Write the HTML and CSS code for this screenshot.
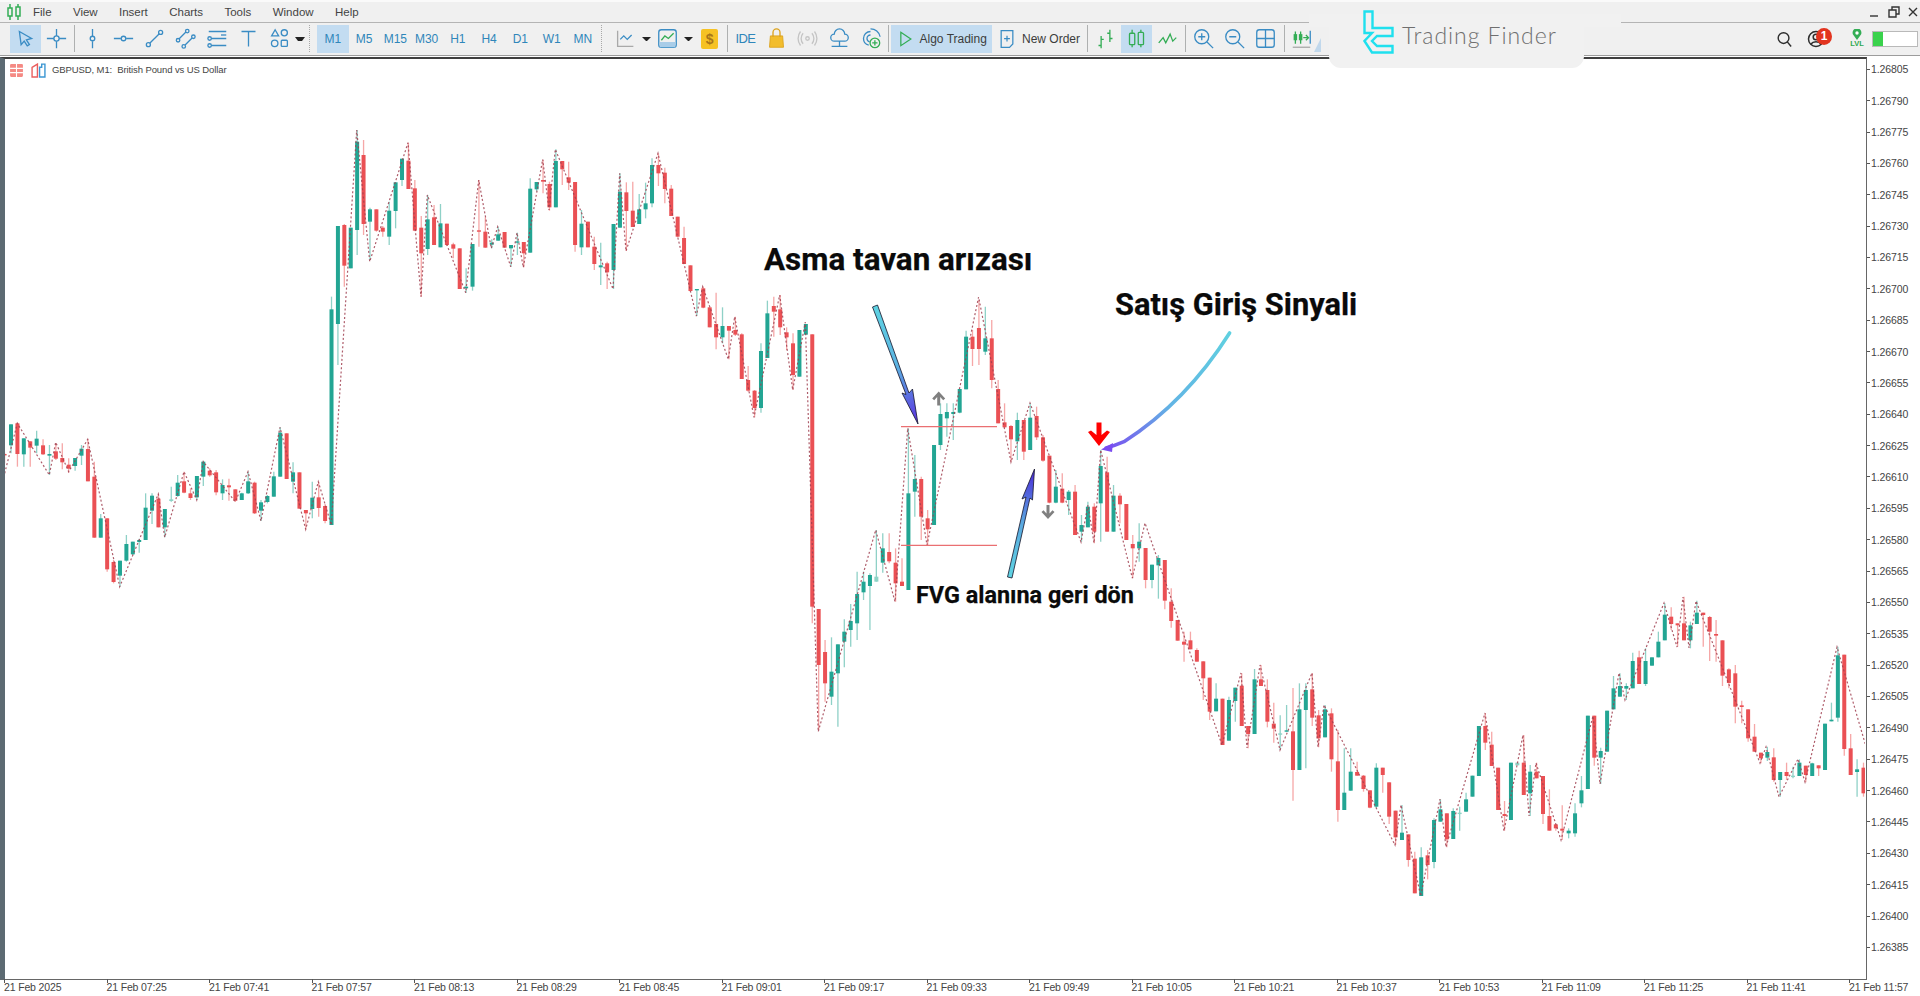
FILE: index.html
```html
<!DOCTYPE html>
<html lang="tr">
<head>
<meta charset="utf-8">
<title>GBPUSD, M1</title>
<link rel="stylesheet" href="styles.css">
</head>
<body>
<div class="app">
  <header class="menubar">
    <svg class="app-logo" viewBox="0 0 18 18"><path class="gr" d="M5 1v16M13 1v16"/><rect class="gr-lite" x="3" y="5" width="4" height="8"/><rect class="gr-lite" x="11" y="4" width="4" height="9"/></svg>
    <nav class="menu"><span>File</span><span>View</span><span>Insert</span><span>Charts</span><span>Tools</span><span>Window</span><span>Help</span></nav>
    <div class="winctl">
      <svg viewBox="0 0 14 14"><path class="dk" d="M2 11h8"/></svg>
      <svg viewBox="0 0 14 14"><path class="dk" d="M2 5h7v7H2zM5 5V2h7v7H9"/></svg>
      <svg viewBox="0 0 14 14"><path class="dk" d="M3 3l8 8M11 3l-8 8"/></svg>
    </div>
  </header>

  <div class="toolbar">
    <button class="tb on"><svg viewBox="0 0 24 24"><path class="ic" d="M5 4l14 8-6 1.5 3.5 5.5-2.5 1.5-3.5-5.5L7 19z"/></svg></button>
    <button class="tb"><svg viewBox="0 0 24 24"><path class="ic" d="M1 12h8M15 12h8M12 1v8M12 15v8"/><circle class="ic" cx="12" cy="12" r="3"/></svg></button>
    <i class="sep"></i>
    <button class="tb"><svg viewBox="0 0 24 24"><path class="ic" d="M12 1v8M12 15v8"/><circle class="ic" cx="12" cy="12" r="2.6"/></svg></button>
    <button class="tb"><svg viewBox="0 0 24 24"><path class="ic" d="M1 12h8M15 12h8"/><circle class="ic" cx="12" cy="12" r="2.6"/></svg></button>
    <button class="tb"><svg viewBox="0 0 24 24"><path class="ic" d="M6.5 17.5L17.5 6.5"/><circle class="ic" cx="5" cy="19" r="2.3"/><circle class="ic" cx="19" cy="5" r="2.3"/></svg></button>
    <button class="tb"><svg viewBox="0 0 24 24"><path class="ic" d="M4.5 12.5L12.5 4.5M11.5 19.5L19.5 11.5"/><circle class="ic" cx="14" cy="3.5" r="2"/><circle class="ic" cx="3.5" cy="14" r="2"/><circle class="ic" cx="10" cy="21" r="2"/><circle class="ic" cx="21" cy="10" r="2"/></svg></button>
    <button class="tb"><svg viewBox="0 0 24 24"><path class="ic" d="M2 4h20M5 12h17M5 20h17"/><circle class="ic" cx="3" cy="20" r="2"/><circle class="ic" cx="3" cy="12" r="2"/><path class="ic" d="M16 8h6"/></svg></button>
    <button class="tb"><svg viewBox="0 0 24 24"><path class="ic" d="M4 4h16M12 4v17"/></svg></button>
    <button class="tb"><svg viewBox="0 0 24 24"><path class="ic" d="M7 2l4 7H3z"/><circle class="ic" cx="17.5" cy="5.5" r="3.5"/><circle class="ic" cx="6.5" cy="17.5" r="3.7"/><rect class="ic" x="14" y="14" width="7" height="7" rx="1"/></svg></button>
    <span class="caret"></span>
    <i class="grip g1"></i>
    <button class="tb tf on">M1</button><button class="tb tf">M5</button><button class="tb tf">M15</button><button class="tb tf">M30</button><button class="tb tf">H1</button><button class="tb tf">H4</button><button class="tb tf">D1</button><button class="tb tf">W1</button><button class="tb tf">MN</button>
    <i class="grip g2"></i>
    <button class="tb"><svg viewBox="0 0 24 24"><path class="gy" d="M3 3v18h18"/><path class="ic" d="M6 13l4-4 4 4 5-5"/></svg></button>
    <span class="caret c2"></span>
    <button class="tb"><svg viewBox="0 0 24 24"><rect class="ic" x="2" y="2" width="20" height="20" rx="3"/><path class="ic-f" d="M3 16h18v5a1 1 0 0 1-1 1H4a1 1 0 0 1-1-1z"/><path class="gr" d="M5 14l4-5 4 3 6-6"/></svg></button>
    <span class="caret c2"></span>
    <button class="tb"><span class="dollar">$</span></button>
    <i class="sep"></i>
    <button class="tb tf ide">IDE</button>
    <button class="tb"><svg viewBox="0 0 24 24"><path class="gold" d="M5 9h14l1 13H4z"/><path class="gold-l" d="M8 10V5a4 4 0 0 1 8 0v5"/></svg></button>
    <button class="tb"><svg viewBox="0 0 24 24"><circle class="lg" cx="12" cy="12" r="2"/><path class="lg" d="M7 6a9 9 0 0 0 0 12M17 6a9 9 0 0 1 0 12M4 4a13 13 0 0 0 0 16M20 4a13 13 0 0 1 0 16"/></svg></button>
    <button class="tb"><svg viewBox="0 0 24 24"><path class="ic" d="M6 15a4 4 0 0 1 0-8 6 6 0 0 1 12 0 4 4 0 0 1 0 8zM12 15v6M3 21h18"/></svg></button>
    <button class="tb"><svg viewBox="0 0 24 24"><path class="ic" d="M12 4a8 8 0 0 0-8 8 8 8 0 0 0 6 7.700M12 8a4 4 0 0 0-4 4 4 4 0 0 0 3 3.800M12 1a11 11 0 0 1 11 9"/><circle class="gr" cx="17" cy="17" r="5.500"/><path class="gr" d="M14 17h6M17 14v6"/></svg></button>
    <i class="sep"></i>
    <button class="tb-text on algo"><svg viewBox="0 0 24 24"><path class="gr" d="M7 4l12 8-12 8z"/></svg><span>Algo Trading</span></button>
    <button class="tb-text order"><svg viewBox="0 0 24 24"><path class="ic" d="M5 2h14v16l-4 4H5z"/><path class="ic" d="M12 8v7M8.500 11.500h7"/></svg><span>New Order</span></button>
    <i class="sep"></i>
    <button class="tb"><svg viewBox="0 0 24 24"><path class="gr" d="M7 9v14M4 20h3M7 13h3M17 2v14M14 6h3M17 12h3"/></svg></button>
    <button class="tb on"><svg viewBox="0 0 24 24"><path class="gr" d="M7 2v20M17 2v20"/><rect class="gr-o" x="4" y="6" width="6" height="13" rx="1"/><rect class="gr-o" x="14" y="5" width="6" height="14" rx="1"/></svg></button>
    <button class="tb"><svg viewBox="0 0 24 24"><path class="gr" d="M2 17l5-6 3 6 5-10 3 8 4-4"/></svg></button>
    <i class="sep"></i>
    <button class="tb"><svg viewBox="0 0 24 24"><circle class="ic" cx="10" cy="10" r="8"/><path class="ic" d="M16 16l7 7M6 10h8M10 6v8"/></svg></button>
    <button class="tb"><svg viewBox="0 0 24 24"><circle class="ic" cx="10" cy="10" r="8"/><path class="ic" d="M16 16l7 7M6 10h8"/></svg></button>
    <button class="tb"><svg viewBox="0 0 24 24"><rect class="ic" x="2" y="2" width="20" height="20" rx="3"/><path class="ic" d="M12 2v20M2 12h20"/></svg></button>
    <i class="sep"></i>
    <button class="tb"><svg viewBox="0 0 24 24"><path class="gr" d="M5 4v14M11 4v14"/><rect class="gr-f" x="3" y="7" width="4" height="7"/><rect class="gr-f" x="9" y="7" width="4" height="7"/><path class="gr" d="M14 11h5M17 8l3 3-3 3"/><path class="ic" d="M22 3v15"/><path class="gy" d="M2 22h20"/></svg></button>
    <span class="autotri"></span>
    <div class="status">
      <svg class="st-search" viewBox="0 0 18 18"><circle class="dk2" cx="8" cy="8" r="5.700"/><path class="dk2" d="M12 12l4 5"/></svg>
      <div class="user">
        <svg viewBox="0 0 20 20"><circle class="dk2" cx="9" cy="10" r="7.500"/><circle class="dk2" cx="9" cy="8" r="2.800"/><path class="dk2" d="M4 15c2-3 8-3 10 0"/></svg>
        <span class="badge">1</span>
      </div>
      <div class="lvl">
        <svg viewBox="0 0 12 11"><path class="gr-f" d="M6 11L2 5.500a4.400 4.400 0 1 1 8 0z"/><circle class="wh" cx="6" cy="4" r="1.700"/></svg>
        <span>LVL</span>
      </div>
      <div class="meter"><i></i></div>
    </div>
  </div>

  <main class="chart-window">
    <div class="plot-row">
      <div class="plot">
        <div class="chart-title">
          <svg viewBox="0 0 14 14"><rect class="t-red" x="1" y="1" width="12" height="12" rx="1"/><path class="wh-l" d="M1 5h12M1 9h12M7 1v12"/></svg>
          <svg viewBox="0 0 14 14"><path class="t-red-o" d="M1 4l5-3v12H1z"/><path class="t-blue-o" d="M8 13V4h2V1h3v12z"/></svg>
          <span>GBPUSD, M1:&nbsp; British Pound vs US Dollar</span>
        </div>
        <svg id="chart" class="chart" viewBox="5 59 1860 920">
          <defs>
            <linearGradient id="arrowA" gradientUnits="userSpaceOnUse" x1="875" y1="306" x2="918" y2="424"><stop offset="0" stop-color="#5fd3e2"/><stop offset=".5" stop-color="#5cb4e2"/><stop offset="1" stop-color="#5a2fe0"/></linearGradient>
            <linearGradient id="arrowB" gradientUnits="userSpaceOnUse" x1="1010" y1="577" x2="1034" y2="469"><stop offset="0" stop-color="#5fd3e2"/><stop offset=".5" stop-color="#5aa8e0"/><stop offset="1" stop-color="#4a28d8"/></linearGradient>
            <linearGradient id="arrowC" gradientUnits="userSpaceOnUse" x1="1229" y1="333" x2="1105" y2="449"><stop offset="0" stop-color="#5fd0e0"/><stop offset=".55" stop-color="#62b4e4"/><stop offset="1" stop-color="#7a4cf0"/></linearGradient>
          </defs>
          <g id="series"></g>
          <path class="level" d="M901 426.700H997M901 545.300H997"/>
          <path class="sig-grey" d="M938.700 391.500l6.500 7-2 1.800-3-3.200v8.400h-3v-8.400l-3 3.200-2-1.800z"/>
          <path class="sig-grey" d="M1048 519l-6.500-7 2-1.800 3 3.200V505h3v8.400l3-3.200 2 1.800z"/>
          <path class="sig-red" d="M1099 446l-11-14 3-1.500 5.500 4.500v-12.500h5V435l5.500-4.500 3 1.500z"/>
          <polygon class="arrow-a" points="872.500,307 877.500,305 909,393 912.500,389 918,424 902,393 906,394.500"/>
          <polygon class="arrow-b" points="1007.500,577 1012,578 1030,498 1032.500,500 1034.500,469 1022,499 1026,497"/>
          <path class="arrow-c" d="M1229.600 333Q1186 402 1124 441.700Q1114 446 1106 448"/>
          <polygon class="arrow-c-head" points="1101,449.500 1113,443 1112,452"/>
        </svg>
      </div>
      <div class="yaxis">
        <span>1.26805</span><span>1.26790</span><span>1.26775</span><span>1.26760</span><span>1.26745</span><span>1.26730</span><span>1.26715</span><span>1.26700</span><span>1.26685</span><span>1.26670</span><span>1.26655</span><span>1.26640</span><span>1.26625</span><span>1.26610</span><span>1.26595</span><span>1.26580</span><span>1.26565</span><span>1.26550</span><span>1.26535</span><span>1.26520</span><span>1.26505</span><span>1.26490</span><span>1.26475</span><span>1.26460</span><span>1.26445</span><span>1.26430</span><span>1.26415</span><span>1.26400</span><span>1.26385</span>
      </div>
    </div>
    <div class="xaxis">
      <span>21 Feb 2025</span><span>21 Feb 07:25</span><span>21 Feb 07:41</span><span>21 Feb 07:57</span><span>21 Feb 08:13</span><span>21 Feb 08:29</span><span>21 Feb 08:45</span><span>21 Feb 09:01</span><span>21 Feb 09:17</span><span>21 Feb 09:33</span><span>21 Feb 09:49</span><span>21 Feb 10:05</span><span>21 Feb 10:21</span><span>21 Feb 10:37</span><span>21 Feb 10:53</span><span>21 Feb 11:09</span><span>21 Feb 11:25</span><span>21 Feb 11:41</span><span>21 Feb 11:57</span>
    </div>
  </main>

  <div class="note note-a">Asma tavan arızası</div>
  <div class="note note-b">Satış Giriş Sinyali</div>
  <div class="note note-c">FVG alanına geri dön</div>

  <div class="brand">
    <svg class="brand-bg" viewBox="0 0 312 68"><path d="M0 14H312V27H275V56a12 12 0 0 1-12 12H32a12 12 0 0 1-12-12V27H0z"/></svg>
    <svg class="brand-mark" viewBox="0 0 31 44"><path d="M1.500 1.500h8v16.500h20v8H14l-5 5 5 5h15.500v6.500H9L1.500 31l7.500-8H1.500z"/></svg>
    <span class="brand-name">Trading Finder</span>
  </div>
</div>
<script src="chart.js"></script>
</body>
</html>
```
FILE: styles.css
```css
* { box-sizing: border-box; }
html, body { margin: 0; padding: 0; background: #fff; }
.app { position: relative; width: 1920px; height: 996px; overflow: hidden; display: flex; flex-direction: column; font-family: "Liberation Sans", Arial, sans-serif; color: #3c3c3c; }

.menubar { height: 23px; flex: none; display: flex; align-items: center; background: #f0f0f0; border-top: 2px solid #fafafa; border-bottom: 1px solid #b4b4b4; }
.app-logo { width: 18px; height: 18px; margin-left: 5px; }
.menu { display: flex; gap: 21.4px; margin-left: 10px; font-size: 11.5px; color: #444; }
.winctl { margin-left: auto; margin-right: 0; display: flex; gap: 5px; }
.winctl svg { width: 14px; height: 14px; }

.toolbar { height: 33px; flex: none; display: flex; align-items: center; padding: 0 0 1px 9.5px; background: #f0f0f0; border-bottom: 1px solid #9c9c9c; }
.tb { flex: none; width: 31.25px; height: 28px; padding: 0; margin: 0; border: 0; background: none; display: flex; align-items: center; justify-content: center; font: 12px "Liberation Sans", Arial, sans-serif; }
.tb svg { width: 21px; height: 21px; }
.tb.on, .tb-text.on { background: #c3dcf1; }
.tf { color: #2f86ba; }
.ide { letter-spacing: -.6px; font-size: 13px; }
.sep { flex: none; width: 4.5px; height: 27px; position: relative; }
.sep::before { content: ""; position: absolute; left: 2px; top: 0; bottom: 0; width: 1px; background: #aeb0b0; }
.caret { flex: none; width: 10px; height: 0; border-left: 3.5px solid transparent; border-right: 3.5px solid transparent; border-top: 4px solid #222; background-clip: padding-box; }
.caret.c2 { width: 9px; border-left-width: 4px; border-right-width: 4px; margin: 0 1px; }
.grip { flex: none; height: 27px; border-left: 1px dotted #a8a8a8; }
.g1 { width: 8px; margin: 0 0 0 4px; }
.g2 { width: 5px; margin: 0 4px 0 2px; }
.dollar { width: 17px; height: 20px; border-radius: 2px; background: #f6c224; color: #a8761a; font: 700 14px/20px "Liberation Sans", Arial, sans-serif; text-align: center; }
.tb-text { flex: none; height: 28px; padding: 0; border: 0; background: none; display: flex; align-items: center; font: 12px "Liberation Sans", Arial, sans-serif; color: #3c3c3c; }
.tb-text svg { width: 20px; height: 20px; margin-right: 5px; }
.algo { width: 101.5px; padding-left: 4px; }
.order { width: 93px; padding-left: 5px; }
.autotri { flex: none; width: 0; height: 0; margin: 12px 0 0 -3px; border-left: 7px solid transparent; border-bottom: 14px solid #c1d8ec; }
.status { margin-left: auto; display: flex; align-items: center; }
.st-search { width: 17px; height: 18px; margin-right: 14px; }
.user { position: relative; width: 18px; height: 20px; margin-right: 24px; }
.user svg { width: 20px; height: 20px; }
.badge { position: absolute; left: 9px; top: -1px; width: 16px; height: 17px; border-radius: 50%; background: #e2341f; color: #fff; font: 700 12px/17px "Liberation Sans", Arial, sans-serif; text-align: center; }
.lvl { width: 16px; display: flex; flex-direction: column; align-items: center; margin-right: 7px; color: #2fa84f; font: 700 7.5px/8px "Liberation Sans", Arial, sans-serif; }
.lvl svg { width: 12px; height: 11px; }
.meter { width: 46px; height: 16px; margin-right: 2px; border: 1px solid #b9b9b9; background: #fff; }
.meter i { display: block; width: 10px; height: 100%; background: #3ad24c; }

.ic { fill: none; stroke: #3a8cc4; stroke-width: 1.5; }
.ic-f { fill: #a9cde8; }
.gy { fill: none; stroke: #a9a9a9; stroke-width: 1.5; }
.gr { fill: none; stroke: #33ad55; stroke-width: 1.5; }
.gr-f { fill: #33ad55; }
.gr-o { fill: #c3dcf1; stroke: #33ad55; stroke-width: 1.5; }
.gr-lite { fill: #f0f0f0; stroke: #33ad55; stroke-width: 1.5; }
.gold { fill: #f2bd2d; stroke: #dca21c; }
.gold-l { fill: none; stroke: #dca21c; stroke-width: 1.5; }
.lg { fill: none; stroke: #c4c4c4; stroke-width: 1.5; }
.dk { fill: none; stroke: #333; stroke-width: 1.4; }
.dk2 { fill: none; stroke: #2d2d2d; stroke-width: 1.5; }
.wh { fill: #fff; }
.wh-l { fill: none; stroke: #fff; }
.t-red { fill: #f58a84; }
.t-red-o { fill: #fff; stroke: #ea5f5f; stroke-width: 1.3; }
.t-blue-o { fill: #fff; stroke: #3b96d2; stroke-width: 1.3; }

.chart-window { flex: 1; min-height: 0; display: flex; flex-direction: column; }
.plot-row { height: 924px; flex: none; display: flex; border-top: 1px solid #fff; }
.plot { position: relative; width: 1866.5px; flex: none; border-top: 2px solid #3f3f3f; border-left: 5px solid #5c6a72; border-right: 1.5px solid #666; border-bottom: 1px solid #666; }
.chart { display: block; width: 1860px; height: 920px; }
.chart-title { position: absolute; left: 4px; top: 3px; display: flex; align-items: center; font-size: 9.5px; letter-spacing: -.1px; line-height: 16px; color: #444; }
.chart-title svg { width: 15px; height: 15px; margin-right: 7px; }
.chart-title span { margin-left: -1px; }

.yaxis { flex: none; display: flex; flex-direction: column; padding-top: 5.3px; font-size: 10.5px; letter-spacing: -.12px; color: #444; }
.yaxis span { position: relative; height: 31.37px; line-height: 14px; padding-left: 4.5px; }
.yaxis span::before { content: ""; position: absolute; left: 0; top: 6.5px; width: 3px; height: 1px; background: #555; }
.xaxis { display: flex; padding-left: 4px; font-size: 10.5px; letter-spacing: -.15px; color: #444; }
.xaxis span { position: relative; flex: none; width: 102.5px; white-space: nowrap; line-height: 14px; }
.xaxis span::before { content: ""; position: absolute; left: 0; top: -1px; width: 1px; height: 4px; background: #555; }

.wick-up { stroke: #1fa38f; stroke-opacity: .5; stroke-width: 1.3; }
.wick-dn { stroke: #ee4f4f; stroke-opacity: .5; stroke-width: 1.3; }
.body-up { fill: #22a593; }
.body-dn { fill: #ea5054; }
.body-doji { fill: #8fd3c6; }
.zigzag { fill: none; stroke: #a03f50; stroke-opacity: .85; stroke-width: 1.2; stroke-dasharray: 2 2.2; }
.level { fill: none; stroke: #ea6f72; stroke-width: 1.3; }
.sig-grey { fill: #808080; }
.sig-red { fill: #ff0000; }
.arrow-a { fill: url(#arrowA); stroke: #14142a; stroke-width: .8; }
.arrow-b { fill: url(#arrowB); stroke: #14142a; stroke-width: .8; }
.arrow-c { fill: none; stroke: url(#arrowC); stroke-width: 3.6; stroke-linecap: round; }
.arrow-c-head { fill: #7a4cf0; }

.note { position: absolute; white-space: nowrap; color: #0a0a0a; font-family: Roboto, "Liberation Sans", sans-serif; font-weight: 700; -webkit-text-stroke: .25px #0a0a0a; }
.note-a { left: 764px; top: 241px; font-size: 31.4px; line-height: 37px; }
.note-b { left: 1115px; top: 286px; font-size: 30.8px; line-height: 37px; }
.note-c { left: 916px; top: 580px; font-size: 23.4px; line-height: 30px; }

.brand { position: absolute; left: 1309px; top: 0; width: 312px; height: 68px; }
.brand-bg { position: absolute; inset: 0; width: 312px; height: 68px; }
.brand-bg path { fill: #f1f1f1; }
.brand-mark { position: absolute; left: 54px; top: 10px; width: 31px; height: 44px; }
.brand-mark path { fill: none; stroke: #1fe0ee; stroke-width: 2.4; }
.brand-name { position: absolute; left: 93px; top: 20px; font: 300 23px/30px Lato, "Open Sans", sans-serif; letter-spacing: .95px; color: #6f6f6f; white-space: nowrap; }
```
FILE: chart.js
```js
// Candle data as read from the chart: colour + bodyTop,bodyBottom,high,low.
// G up, R down, L light doji. Each block has its start bar, y origin and scale.
var blocks = [
  { start: 0, oy: 410, d: "R132,136,128,160 G43,106,43,130 R40,132,38,170 G85,133,85,170 R94,113,94,170 G86,107,62,130 R106,133,88,135 G132,137,105,195 R124,146,100,150 R144,157,100,178 R164,176,145,188 G144,168,144,182 G116,137,105,165 R117,214,88,214 R200,383,155,383 G325,383,312,383 R325,478,325,485 R456,516,450,520 G452,497,452,530 G402,452,375,455 G395,433,395,435 G390,396,386,428 G293,390,250,390 G257,302,250,342 R266,352,252,352 G297,352,297,382 L268,273,230,275 G218,258,195,260 R214,248,185,250 R250,264,235,270 G198,262,198,270 G155,200,152,228 R182,196,175,200 R187,247,180,256 G225,250,208,270 R226,232,206,272 R238,272,238,276 G250,270,248,270 G214,250,185,252 R218,310,215,312 G277,302,270,333 G258,276,255,280 G199,260,185,260 G68,200,52,200 R70,207,70,207 G187,215,157,250 R187,296,187,296 R300,310,300,358 G263,297,215,325 R262,294,215,320 R288,333,282,340" },
  { start: 51, oy: 120, d: "G568,1215,530,1215 G318,612,318,735 R315,437,312,500 G323,445,323,445 G65,330,30,405 R105,312,60,345 G268,305,263,420 R268,332,268,335 R323,335,318,350 G272,350,245,375 G187,273,187,325 G116,180,116,198 R122,207,68,207 R205,332,180,332 R323,400,288,530 G298,387,225,405 R292,375,255,375 G310,382,252,382 R311,375,311,378 R373,386,368,415 R385,507,385,507 G500,505,445,518 G372,500,372,512 R331,334,180,380 R335,383,292,383 G368,374,358,385 G343,362,320,362 R336,383,336,383 G375,385,375,440 G364,368,338,405 R366,400,366,442 G206,398,175,398 G186,208,186,215 R180,185,120,220 R192,262,185,272 G123,262,88,262 R123,148,123,195 R172,188,125,210 R186,375,186,395 G311,382,270,405 R305,382,305,382 R380,432,350,450 G436,442,368,495 R430,457,425,507 G312,450,312,507 G215,323,160,323 R217,273,187,393 R272,321,185,321 G268,312,222,312 G250,268,188,295 G135,250,115,262 R135,160,100,198 R158,207,143,250 R206,288,195,288 R290,350,290,352 R354,432,320,432 R436,513,436,515 G507,511,507,588 R505,563,500,565 R562,622,562,622 R612,652,518,688 G618,652,562,670 R618,632,618,718 R630,644,590,648 R643,777,640,777 R780,812,738,815 R812,864,810,892 G693,864,670,878 G580,714,542,714 R558,575,530,650 R568,622,525,645 R637,652,622,690 R670,765,640,810 G630,770,630,770 G612,644,612,644" },
  { start: 126, oy: 400, d: "R-197,620,-197,670 R627,795,627,990 R756,850,720,905 G815,890,712,915 G733,820,733,980 G695,725,658,802 G663,690,612,740 G582,670,515,720 G545,577,515,600 G525,558,520,690 L530,545,390,545 G445,488,400,518 R456,484,400,490 R488,550,445,605 R545,558,475,558 G280,570,85,570 G237,275,165,350 R237,350,230,420 R355,388,330,435" },
  { start: 145, oy: 240, d: "G615,855,615,855 G522,615,490,630 G516,535,490,590 G516,522,490,600 G447,518,447,520 G290,448,272,448 R290,327,270,378 R264,327,180,375 G295,335,200,345 R295,420,240,445 R447,550,420,550 R547,562,490,562 R558,598,555,665 G540,604,518,660 R540,635,540,660 G533,630,490,630 R528,592,500,600 R592,662,585,665 R647,788,647,790 G740,788,690,790 R746,788,700,790 G755,780,750,825 R755,885,735,885 G855,875,825,905 G800,862,785,862 R800,875,790,910 G678,790,630,905 R697,875,650,875 G767,875,735,875 R767,793,760,850 R792,900,792,900" },
  { start: 176, oy: 520, d: "R72,85,45,175 G65,85,10,125 R84,180,84,205 G134,180,134,205 G114,136,105,236 R120,242,120,268 R245,303,205,323 R300,362,300,362 R365,374,335,425 R361,388,335,388 R390,425,385,425 R424,475,424,540 R473,575,473,600 G536,574,490,574 R536,675,536,675 G540,662,530,662 G503,543,503,605 R497,618,460,618 R618,642,618,685 G478,642,447,642 R478,498,435,498 R510,605,478,622 R611,626,548,668 L640,642,586,690 G631,635,555,635 R634,750,504,842 G568,750,490,750 G510,570,490,745 R508,593,460,618 R586,655,570,682 G568,652,555,652 R580,718,565,755 R724,870,630,905 G818,870,685,870 G755,812,685,812 R756,767,725,767 R767,807,765,815 R811,863,811,865 G743,860,730,865 R743,765,743,818 R787,890,787,912 R872,952,872,975 G938,960,855,960 R943,1020,943,1040 R1016,1120,995,1120 G1012,1128,982,1128 R1006,1035,990,1078 G900,1026,895,1045 G868,905,838,905 R880,958,880,982 G873,957,865,957 L878,882,860,932 G838,875,818,875 G767,830,767,830 G618,768,618,768 R618,668,580,690 R674,738,635,738 R743,870,743,870 R882,888,843,932" },
  { start: 235, oy: 580, d: "G548,720,548,720 L548,556,548,556 R548,645,465,645 G575,640,555,708 R575,595,548,595 R588,702,588,732 R708,752,628,752 R733,745,733,752 R746,752,676,780 G752,760,745,775 G700,760,670,770 G631,670,588,682 G407,627,407,627 R407,533,407,557 G513,533,503,612 G392,515,392,515 G325,388,288,388 G318,350,280,350 G318,326,310,360 G243,325,218,325 R232,312,212,312 G243,312,205,318 G232,257,232,257 G185,232,155,232 G104,181,70,181 R110,132,82,150 R130,136,130,200 R130,181,50,181 G136,181,125,205 G98,132,62,132 R98,105,98,200 R111,155,108,243 R162,167,120,245 R181,287,181,318 R268,309,265,325 R280,380,255,430 R376,381,362,430 R388,475,388,485 R470,515,432,515 R518,535,518,550 G516,533,500,543 R532,600,505,605 G576,600,576,650 R576,588,548,600 L587,590,560,595 G548,588,538,588 R557,585,557,607 G550,588,548,588 R556,565,556,588 G431,570,431,570 G419,424,368,424 G226,413,200,425 R224,507,224,527 R505,585,462,585 G568,576,538,650 R563,640,548,650" }
];

var zigzag = "4.7,473.3 17.3,423.3 49.3,475 55.7,442.3 68.7,471.7 87.7,439.3 119.7,586.7 158.3,494 164.7,537.3 184,471.7 196.7,500 203.3,461.7 235.3,501.7 248,471.7 261,521 280,427.3 305.7,529.3 318.3,481.7 331.3,525 356.7,130 369.7,261.7 408,142.7 421,296.7 427.3,195 465.7,292.7 478.7,180 491.3,248.3 497.7,226.7 510.7,266.7 517,232.7 523.3,267.3 542.7,159.3 549,210 555.3,149.3 613,289 619.7,173.3 626,251 658,153.3 696.3,316 702.7,286.7 728.3,359.3 734.7,316.7 754,417.3 779.7,295 792.7,390 805.3,322 818.2,731.7 875.7,530 895,601.7 907.7,428.3 927,545 978.6,297 1011,462 1030,403 1081,542 1088,505 1094,543 1100.7,450 1132.3,578 1145,523 1222,745 1241,673 1247,748 1260,665 1280,750 1312,673 1318,747 1324,705 1395,845 1401,805 1420.7,896 1440,799 1446,847 1485,713 1504,831 1523,735 1529,816 1536,763 1561,840 1593,716 1600,784 1619,673 1625,700 1664,603 1677,647 1683,597 1689,648 1696,601 1760,763 1766,747 1779,797 1798,759 1805,782 1837,647 1867,750";

var NS = "http://www.w3.org/2000/svg";
var series = document.getElementById("series");

function add(tag, attrs) {
  var el = document.createElementNS(NS, tag);
  for (var k in attrs) el.setAttribute(k, attrs[k]);
  series.appendChild(el);
  return el;
}

blocks.forEach(function (b) {
  b.d.split(" ").forEach(function (tok, n) {
    var kind = tok.charAt(0);
    var v = tok.slice(1).split(",").map(function (s) { return b.oy + Number(s) / 3; });
    var x = 4.6 + 6.41 * (b.start + n);
    var up = kind !== "R";
    add("line", { x1: x, x2: x, y1: v[2], y2: v[3], "class": up ? "wick-up" : "wick-dn" });
    add("rect", {
      x: x - 2, y: v[0], width: 4, height: Math.max(v[1] - v[0], 1.4),
      "class": kind === "L" ? "body-doji" : up ? "body-up" : "body-dn"
    });
  });
});

add("polyline", { points: zigzag, "class": "zigzag" });
```
